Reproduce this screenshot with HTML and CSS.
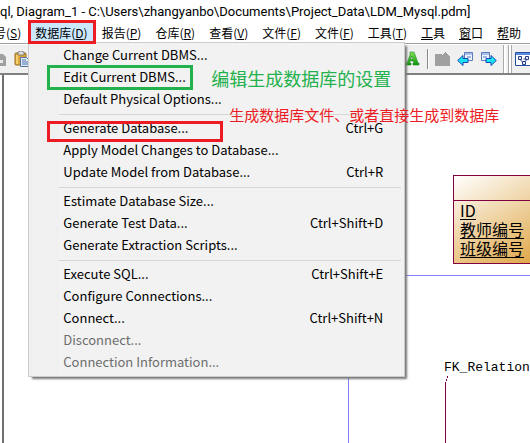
FILE: index.html
```html
<!DOCTYPE html>
<html lang="zh-CN">
<head>
<meta charset="utf-8">
<title>LDM_Mysql.pdm</title>
<link rel="stylesheet" href="styles.css">
</head>
<body>
<header class="title">ql, Diagram_1 - C:\Users\zhangyanbo\Documents\Project_Data\LDM_Mysql.pdm]</header>
<nav class="menubar">
  <button class="menu first">号(<u>S</u>)</button>
  <div class="menu-wrap">
    <button class="menu open">数据库(<u>D</u>)</button>
    <div class="dropdown">
      <button class="item">Change Current DBMS...</button>
      <button class="item">Edit Current DBMS...</button>
      <button class="item">Default Physical Options...</button>
      <hr>
      <button class="item">Generate Database...<kbd>Ctrl+G</kbd></button>
      <button class="item">Apply Model Changes to Database...</button>
      <button class="item">Update Model from Database...<kbd>Ctrl+R</kbd></button>
      <hr>
      <button class="item">Estimate Database Size...</button>
      <button class="item">Generate Test Data...<kbd>Ctrl+Shift+D</kbd></button>
      <button class="item">Generate Extraction Scripts...</button>
      <hr>
      <button class="item">Execute SQL...<kbd>Ctrl+Shift+E</kbd></button>
      <button class="item">Configure Connections...</button>
      <button class="item">Connect...<kbd>Ctrl+Shift+N</kbd></button>
      <button class="item" disabled>Disconnect...</button>
      <button class="item" disabled>Connection Information...</button>
      <div class="mark mark-edit"></div>
      <div class="mark mark-generate"></div>
      <div class="note note-edit">编辑生成数据库的设置</div>
      <div class="note note-generate">生成数据库文件、或者直接生成到数据库</div>
    </div>
    <div class="mark mark-menu"></div>
  </div>
  <button class="menu">报告(<u>P</u>)</button>
  <button class="menu">仓库(<u>R</u>)</button>
  <button class="menu">查看(<u>V</u>)</button>
  <button class="menu">文件(<u>F</u>)</button>
  <button class="menu">文件(<u>F</u>)</button>
  <button class="menu">工具(<u>T</u>)</button>
  <button class="menu"><u>工</u>具</button>
  <button class="menu"><u>窗</u>口</button>
  <button class="menu"><u>帮</u>助</button>
</nav>
<div class="toolbar">
  <div class="tools-left">
    <button class="tool copy" aria-label="复制">
      <svg width="6" height="16" viewBox="0 0 6 16"><path d="M0 3h3l3 3v9H0z" fill="#a0a0a0"/><path d="M0 9h3v3H0z" fill="#e8e8e8"/></svg>
    </button>
    <button class="tool" aria-label="粘贴">
      <svg width="16" height="16" viewBox="0 0 16 16"><rect x="1" y="2" width="11" height="12" rx="1" fill="#dda63a" stroke="#93701f"/><path d="M2 4h2v9H2z" fill="#f4cf72"/><path d="M4 1h1l1-1h2l1 1h1v3H4z" fill="#ddd" stroke="#666" stroke-width=".7"/><path d="M6.500 6.500h6l3 3v6h-9z" fill="#dce9fb" stroke="#56739f"/><path d="M8 9h4M8 11h6M8 13h6" stroke="#5577aa"/></svg>
    </button>
  </div>
  <div class="tools-right">
    <button class="tool" aria-label="字体">
      <svg width="16" height="16" viewBox="0 0 16 16"><defs><linearGradient id="ga" x2="0" y2="1"><stop stop-color="#8be05c"/><stop offset="1" stop-color="#079507"/></linearGradient></defs><path fill-rule="evenodd" d="M5 1h4l4 11h1v2H8v-2h1l-.6-2H5l-.6 2H6v2H0v-2h2L5 4zM6.700 5L5.500 8.500h2.500z" fill="url(#ga)" stroke="#188a20" stroke-width=".6"/></svg>
    </button>
    <span class="divider"></span>
    <button class="tool" aria-label="上级">
      <svg width="16" height="16" viewBox="0 0 16 16"><path d="M0 3h7v1h1V3h1V2h1V1h1v1h1v1h1v1h1v1h1v10H0z" fill="#a0a0a0"/></svg>
    </button>
    <button class="tool" aria-label="后退">
      <svg width="17" height="16" viewBox="0 0 17 16"><path d="M7.500 1.500h8v8h-8z" fill="#eef4ff" stroke="#5b7bb8"/><path d="M8 2h7v2H8z" fill="#a9c0ea"/><path d="M10 6h4" stroke="#5b7bb8"/><path d="M.7 9.500L6 4.500v3h5v4H6v3z" fill="#18e4f4" stroke="#1647b4"/></svg>
    </button>
    <button class="tool" aria-label="前进">
      <svg width="17" height="16" viewBox="0 0 17 16"><path d="M1.500 1.500h8v8h-8z" fill="#eef4ff" stroke="#5b7bb8"/><path d="M2 2h7v2H2z" fill="#a9c0ea"/><path d="M3 6h4" stroke="#5b7bb8"/><path d="M16.300 9.500L11 4.500v3H6v4h5v3z" fill="#18e4f4" stroke="#1647b4"/></svg>
    </button>
    <span class="grip"></span>
    <button class="tool" aria-label="图表">
      <svg width="15" height="16" viewBox="0 0 15 16"><path d="M.5 1.500h16v13H.5z" fill="#fff" stroke="#2a4f9c"/><path d="M1 2h15v2H1z" fill="#5b8be0"/><path d="M4.500 8l4 4 4-4M8.500 8h3" fill="none" stroke="#2a3f88"/><path d="M3.500 5.500h3v3h-3zM10.500 5.500h3v3h-3zM7.500 10.500h3v3h-3z" fill="#dfe9ff" stroke="#2a3f88"/></svg>
    </button>
  </div>
</div>
<main class="canvas">
  <div class="h-line"></div>
  <div class="v-line"></div>
  <section class="entity">
    <div class="entity-head"></div>
    <div class="entity-body">
      <span class="column">ID</span>
      <span class="column">教师编号</span>
      <span class="column">班级编号</span>
    </div>
  </section>
  <div class="relation">FK_Relation</div>
  <svg class="connector" width="4" height="80" viewBox="0 0 4 80"><path d="M2.500 0v2M1.500 3v2M.5 6v74" stroke="#800040" fill="none"/></svg>
</main>
</body>
</html>
```
FILE: styles.css
```css
* { box-sizing: border-box; }
body {
  margin: 0;
  height: 100vh;
  display: flex;
  flex-direction: column;
  overflow: hidden;
  background: #fff;
  color: #000;
  font: 12px/20px "Noto Sans CJK SC", sans-serif;
}
button {
  margin: 0;
  padding: 0;
  border: 0;
  background: none;
  color: inherit;
  font: inherit;
  text-align: left;
  white-space: nowrap;
}
.title {
  height: 23px;
  line-height: 24px;
  font-size: 13px;
  font-family: Roboto, sans-serif;
  white-space: nowrap;
}
.menubar { display: flex; height: 20px; }
.menu { flex: none; height: 20px; padding: 0 7px; }
.first { margin-left: -13px; }
.menu u { text-underline-offset: 1px; }
.menu-wrap { position: relative; flex: none; }
.open { background: #cce8ff; }
.dropdown {
  position: absolute;
  z-index: 2;
  top: 19px;
  left: 0;
  width: 377px;
  padding: 2px;
  border: 1px solid #ccc;
  background: linear-gradient(90deg, #f0f0f0 30px, #f2f2f2 30px);
  box-shadow: 3px 3px 2px -1px #777;
  font-size: 13px;
}
.item {
  display: flex;
  justify-content: space-between;
  width: 100%;
  height: 22px;
  padding: 0 19px 0 32px;
}
.item:disabled { color: #6d6d6d; }
kbd { font: inherit; }
hr {
  height: 1px;
  margin: 3px 1px 3px 28px;
  border: 0;
  background: #d7d7d7;
}
.mark { position: absolute; border: 3px solid #ed1c24; pointer-events: none; }
.mark-menu { z-index: 3; top: -3px; left: 0; right: -1px; height: 24px; }
.mark-edit { top: 22px; left: 18px; width: 146px; height: 25px; border-color: #22b14c; }
.mark-generate { top: 78px; left: 18px; width: 176px; height: 21px; }
.note { position: absolute; white-space: nowrap; }
.note-edit { top: 25px; left: 182px; color: #22b14c; font-size: 18px; }
.note-generate { top: 62px; left: 200px; color: #ed1c24; font-size: 15px; }
.toolbar {
  display: flex;
  justify-content: space-between;
  height: 32px;
  border-top: 1px solid #a0a0a0;
  border-bottom: 2px solid #808080;
  background: #f0f0f0;
  box-shadow: inset 0 1px #fff;
}
.tools-left, .tools-right { display: flex; align-items: center; }
.tools-left { gap: 8px; }
.tools-right { gap: 6px; }
.tool { flex: none; height: 16px; }
.tool svg { display: block; }
.divider { width: 2px; height: 20px; background: #888; border-right: 1px solid #fff; }
.grip { width: 9px; margin-right: -3px; height: 28px; border: solid #aaa; border-width: 0 1px; background: linear-gradient(90deg, #fff 2px, #f0f0f0 2px 4px, #aaa 4px 5px, #fff 5px); }
.canvas {
  position: relative;
  flex: 1;
  margin-left: 2px;
  border-left: 2px solid #707070;
  overflow: hidden;
}
.h-line { position: absolute; top: 200px; left: 344px; right: 0; height: 1px; background: #8080ff; }
.v-line { position: absolute; top: 200px; left: 344px; bottom: 0; width: 1px; background: #8080ff; }
.entity {
  position: absolute;
  top: 100px;
  left: 449px;
  width: 150px;
  height: 89px;
  border: 1px solid #800040;
  background: linear-gradient(150deg, #fff, #e0a94c 75%);
}
.entity-head { height: 25px; border-bottom: 1px solid #800040; }
.entity-body {
  display: flex;
  flex-direction: column;
  align-items: flex-start;
  padding: 0 6px;
  font-size: 16px;
}
.column { height: 19px; line-height: 18px; border-bottom: 1px solid #000; }
.relation { position: absolute; top: 283px; left: 440px; font: 13px/20px "Liberation Mono", monospace; }
.connector { position: absolute; top: 301px; left: 441px; }
```
